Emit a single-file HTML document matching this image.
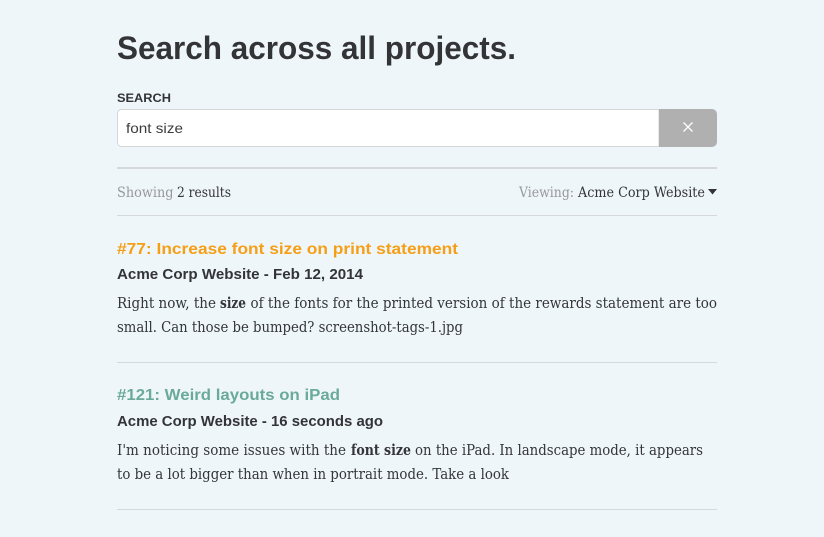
<!DOCTYPE html>
<html lang="en">
<head>
<meta charset="utf-8">
<title>Search across all projects</title>
<style>
html,body{margin:0;padding:0;background:#eff6fa;width:824px;height:537px;overflow:hidden}
svg{position:absolute;left:0;top:0;display:block}
.h{font-family:"Liberation Sans",sans-serif;font-weight:700}
.s{font-family:"DejaVu Serif",serif;font-size:14.500px;fill:#33353a}
.b{font-weight:700}
.g{fill:#96989a}
</style>
</head>
<body>
<svg width="824" height="537" viewBox="0 0 824 537" xmlns="http://www.w3.org/2000/svg">
<rect width="824" height="537" fill="#eff6fa"/>
<text class="h" x="117" y="59" font-size="32" fill="#333436" textLength="399" lengthAdjust="spacingAndGlyphs">Search across all projects.</text>
<text class="h" x="117" y="102" font-size="12" fill="#333436" textLength="54" lengthAdjust="spacingAndGlyphs">SEARCH</text>

<path d="M659 109.500H121.500a4 4 0 0 0-4 4v29a4 4 0 0 0 4 4H659z" fill="#fff" stroke="#d5d6d7"/>
<path d="M659 109h53a5 5 0 0 1 5 5v28a5 5 0 0 1-5 5h-53z" fill="#b0b0b0"/>
<path d="M683.500 122.500l9 9M692.500 122.500l-9 9" stroke="#fff" stroke-width="1.300" fill="none"/>
<text x="126" y="133" font-family="Liberation Sans,sans-serif" font-size="14" fill="#3c3c3c" textLength="57" lengthAdjust="spacingAndGlyphs">font size</text>

<rect x="117" y="167" width="600" height="2" fill="#d6d8da"/>
<text class="s g" x="117" y="197" font-size="13.500" style="font-size:13.500px" textLength="56.500" lengthAdjust="spacingAndGlyphs">Showing</text>
<text class="s" x="177" y="197" style="font-size:13.500px" textLength="54" lengthAdjust="spacingAndGlyphs">2 results</text>
<text class="s g" x="519" y="197" style="font-size:13.500px" textLength="55" lengthAdjust="spacingAndGlyphs">Viewing:</text>
<text class="s" x="578" y="197" style="font-size:13.500px" textLength="127" lengthAdjust="spacingAndGlyphs">Acme Corp Website</text>
<path d="M708 189h9l-4.500 5.500z" fill="#333436"/>
<rect x="117" y="215" width="600" height="1" fill="#d6d8da"/>

<text class="h" x="117" y="254" font-size="16" fill="#f59f16" textLength="341" lengthAdjust="spacingAndGlyphs">#77: Increase font size on print statement</text>
<text class="h" x="117" y="279" font-size="14.500" fill="#333436" textLength="246" lengthAdjust="spacingAndGlyphs">Acme Corp Website - Feb 12, 2014</text>
<text class="s" x="117" y="308" textLength="99" lengthAdjust="spacingAndGlyphs">Right now, the</text>
<text class="s b" x="220" y="308" textLength="26" lengthAdjust="spacingAndGlyphs">size</text>
<text class="s" x="250.500" y="308" textLength="466.500" lengthAdjust="spacingAndGlyphs">of the fonts for the printed version of the rewards statement are too</text>
<text class="s" x="117" y="332" textLength="346" lengthAdjust="spacingAndGlyphs">small. Can those be bumped? screenshot-tags-1.jpg</text>
<rect x="117" y="362" width="600" height="1" fill="#d6d8da"/>

<text class="h" x="117" y="400" font-size="16" fill="#6aaa9a" textLength="223" lengthAdjust="spacingAndGlyphs">#121: Weird layouts on iPad</text>
<text class="h" x="117" y="426" font-size="14.500" fill="#333436" textLength="266" lengthAdjust="spacingAndGlyphs">Acme Corp Website - 16 seconds ago</text>
<text class="s" x="117" y="455" textLength="229" lengthAdjust="spacingAndGlyphs">I'm noticing some issues with the</text>
<text class="s b" x="351" y="455" textLength="60" lengthAdjust="spacingAndGlyphs">font size</text>
<text class="s" x="415" y="455" textLength="288" lengthAdjust="spacingAndGlyphs">on the iPad. In landscape mode, it appears</text>
<text class="s" x="117" y="479" textLength="392" lengthAdjust="spacingAndGlyphs">to be a lot bigger than when in portrait mode. Take a look</text>
<rect x="117" y="509" width="600" height="1" fill="#d6d8da"/>
</svg>
</body>
</html>
